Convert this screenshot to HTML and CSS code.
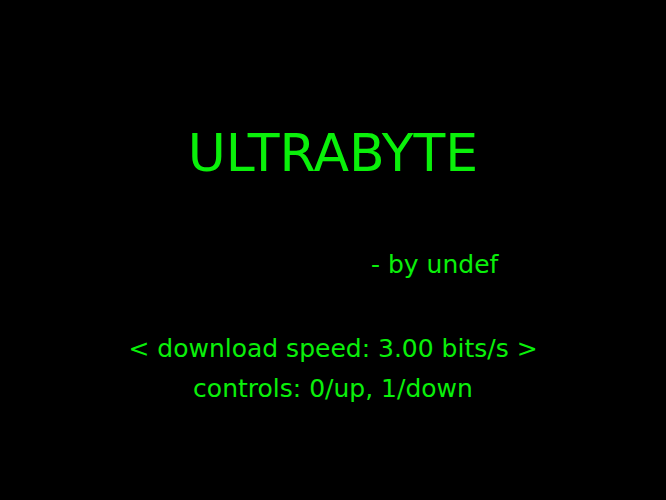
FILE: index.html
```html
<!DOCTYPE html>
<html>
<head>
<meta charset="utf-8">
<link rel="stylesheet" href="styles.css">
</head>
<body>
<main class="screen">
  <h1 class="title">ULTRABYTE</h1>
  <p class="author">- by undef</p>
  <p class="speed">&lt; download speed: 3.00 bits/s &gt;</p>
  <p class="controls">controls: 0/up, 1/down</p>
</main>
</body>
</html>
```
FILE: styles.css
```css
html, body {
  margin: 0;
  padding: 0;
  background: #000;
}
.screen {
  width: 666px;
  height: 500px;
  box-sizing: border-box;
  padding-top: 127px;
  display: flex;
  flex-direction: column;
  font-family: "DejaVu Sans", sans-serif;
  color: #0af00a;
  line-height: 1;
}
.title {
  margin: 0;
  font-size: 52px;
  font-weight: normal;
  text-align: center;
}
.author {
  margin: 73px 0 0;
  padding-left: 371px;
  font-size: 25px;
}
.speed {
  margin: 59px 0 0;
  font-size: 25px;
  text-align: center;
}
.controls {
  margin: 15px 0 0;
  font-size: 25px;
  text-align: center;
}
```
